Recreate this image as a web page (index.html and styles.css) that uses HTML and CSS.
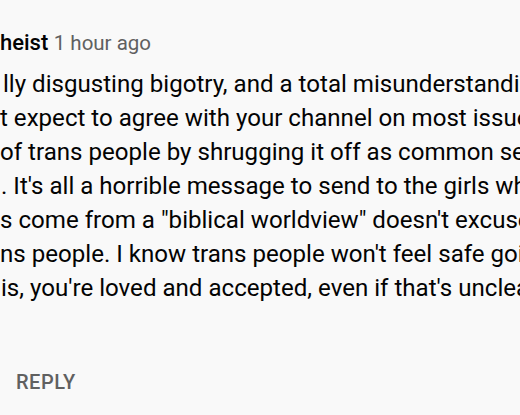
FILE: index.html
```html
<!DOCTYPE html>
<html lang="en">
<head>
<meta charset="utf-8">
<title>Comment</title>
<link rel="stylesheet" href="styles.css">
</head>
<body>
<div class="comment">
  <div class="header"><span class="author">heist</span> <span class="time">1 hour ago</span></div>
  <div class="body">
    <div class="line l1">lly disgusting bigotry, and a total misunderstanding</div>
    <div class="line l2">t expect to agree with your channel on most issues</div>
    <div class="line l3">of trans people by shrugging it off as common sense</div>
    <div class="line l4">. It's all a horrible message to send to the girls who</div>
    <div class="line l5">s come from a "biblical worldview" doesn't excuse</div>
    <div class="line l6">ns people. I know trans people won't feel safe going</div>
    <div class="line l7">is, you're loved and accepted, even if that's unclear</div>
  </div>
  <div class="actions"><span class="reply">REPLY</span></div>
</div>
</body>
</html>
```
FILE: styles.css
```css
html, body {
  margin: 0;
  padding: 0;
  background: #f9f9f9;
}
.comment {
  width: 520px;
  height: 415px;
  overflow: hidden;
  font-family: Roboto, "Liberation Sans", sans-serif;
  padding-top: 28px;
  box-sizing: border-box;
}
.header {
  font-size: 22px;
  line-height: 30px;
  white-space: nowrap;
}
.author {
  font-weight: 500;
  color: #030303;
}
.time {
  font-size: 20.5px;
  color: #606060;
}
.body {
  margin-top: 9px;
  font-size: 24.1px;
  line-height: 34px;
  color: #030303;
}
.line {
  white-space: nowrap;
}
.l1 { text-indent: 3px; }
.l4 { text-indent: 1px; }
.l7 { text-indent: 1px; }
.actions {
  margin-top: 65px;
  padding-left: 16px;
}
.reply {
  font-size: 20px;
  line-height: 24px;
  font-weight: 500;
  color: #606060;
  letter-spacing: 0.5px;
}
```
